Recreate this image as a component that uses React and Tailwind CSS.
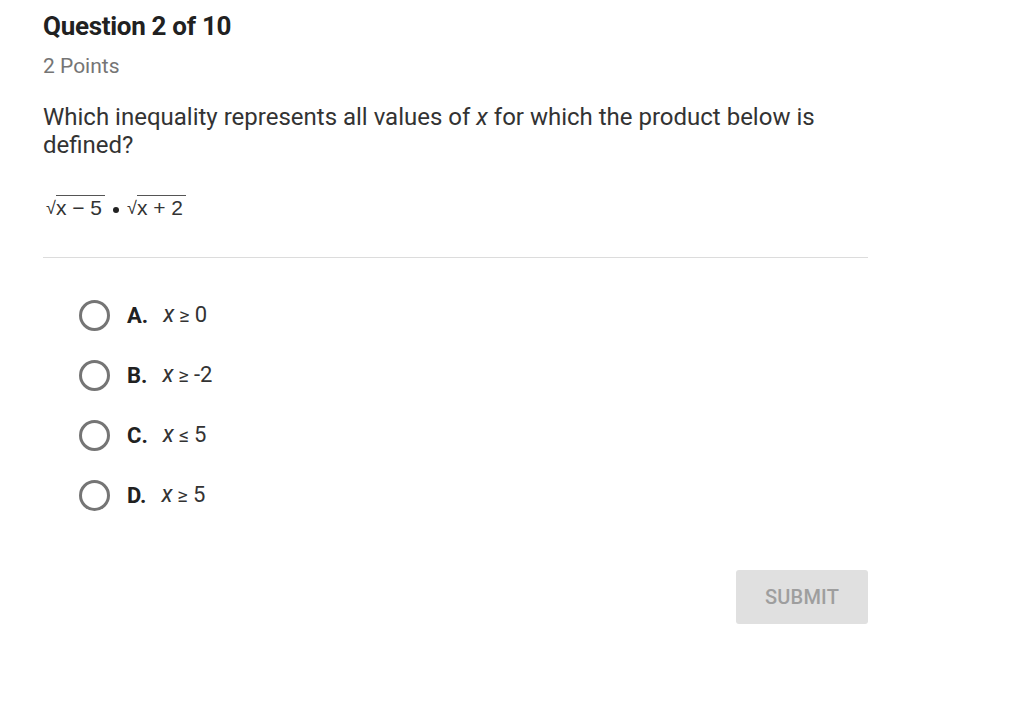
import React from 'react';

const options = [
  { letter: 'A.', op: '≥', value: '0' },
  { letter: 'B.', op: '≥', value: '-2' },
  { letter: 'C.', op: '≤', value: '5' },
  { letter: 'D.', op: '≥', value: '5' },
];

function Sqrt({ children }) {
  return (
    <span className="inline-flex items-end">
      <span className="text-[18px] leading-[21px]">√</span>
      <span className="border-t border-[#555] leading-[23px] pr-[3px] whitespace-pre">{children}</span>
    </span>
  );
}

export default function App() {
  return (
    <div className="min-h-screen bg-white pl-[43px] pt-[9px] text-[#212121]" style={{ fontFamily: 'Roboto, "Noto Sans", sans-serif' }}>
      <div className="w-[825px]">
        <h1 className="text-[26px] font-bold leading-[34px] tracking-[-0.3px]">Question 2 of 10</h1>
        <div className="mt-[9px] text-[21px] leading-[28px] text-[#757575]">2 Points</div>

        <p className="mt-[23px] pr-[8px] text-[24px] leading-[28px] text-[#333]">
          Which inequality represents all values of <i>x</i> for which the product below is defined?
        </p>

        <div className="mt-[36px] flex items-end gap-[8px] pl-[3px] text-[21px] text-[#333]" style={{ fontFamily: '"Liberation Sans", Arial, sans-serif' }}>
          <Sqrt>x − 5</Sqrt>
          <span className="mb-[6px] w-[6px] h-[6px] rounded-full bg-[#222]" />
          <Sqrt>x + 2</Sqrt>
        </div>

        <div className="mt-[38px] border-t border-[#dcdcdc]" />

        <div className="mt-[41px] flex flex-col gap-[28px] pl-[36px]">
          {options.map((o) => (
            <label key={o.letter} className="flex items-center h-[32px] cursor-pointer">
              <span className="w-[31px] h-[31px] rounded-full border-[3px] border-[#757575]" />
              <span className="ml-[17px] text-[22px] font-bold text-[#212121]">{o.letter}</span>
              <span className="ml-[15px] text-[22px] text-[#333]">
                <i className="text-[23px]">x</i>
                <span className="mx-[5px] text-[20px]">{o.op}</span>
                {o.value}
              </span>
            </label>
          ))}
        </div>

        <div className="mt-[59px] flex justify-end">
          <button className="w-[132px] h-[54px] rounded-[3px] bg-[#e0e0e0] text-[20px] text-[#9e9e9e] font-medium tracking-[0.2px]">
            SUBMIT
          </button>
        </div>
      </div>
    </div>
  );
}
